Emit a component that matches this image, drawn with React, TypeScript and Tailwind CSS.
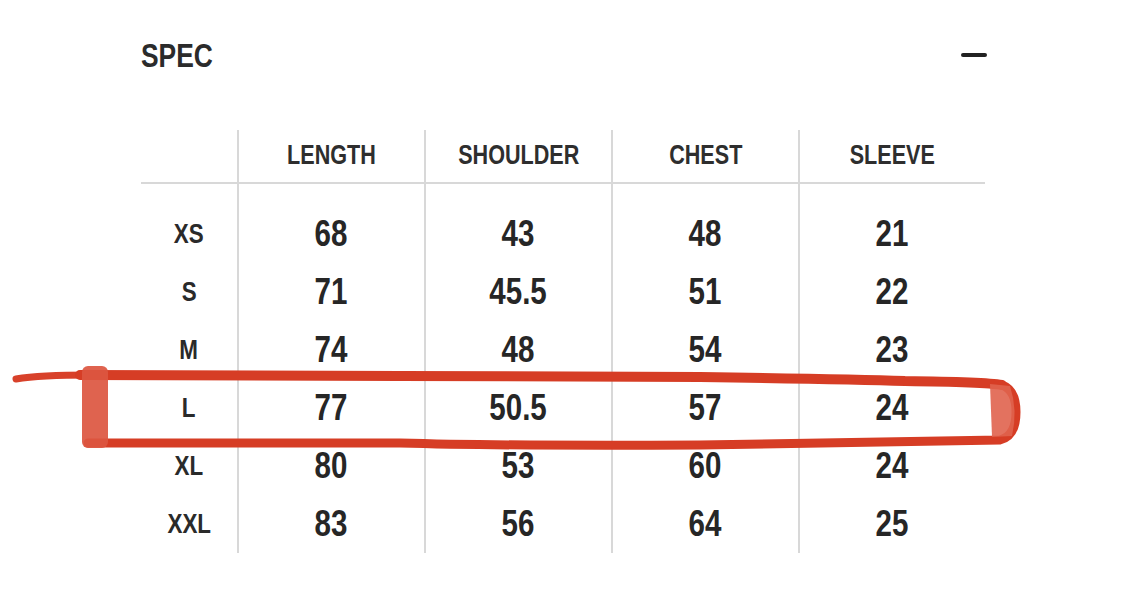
const font = { fontFamily: '"Liberation Sans", Arial, sans-serif' };

const headers = ['LENGTH', 'SHOULDER', 'CHEST', 'SLEEVE'];

const rows: { size: string; values: string[] }[] = [
  { size: 'XS', values: ['68', '43', '48', '21'] },
  { size: 'S', values: ['71', '45.5', '51', '22'] },
  { size: 'M', values: ['74', '48', '54', '23'] },
  { size: 'L', values: ['77', '50.5', '57', '24'] },
  { size: 'XL', values: ['80', '53', '60', '24'] },
  { size: 'XXL', values: ['83', '56', '64', '25'] },
];

function Column({ title, cells, first }: { title: string; cells: string[]; first?: boolean }) {
  return (
    <div className={first ? 'flex flex-col w-[96px]' : 'flex flex-col w-[187px] border-l-2 border-[#d8d8d8]'}>
      <div className="h-[54px] border-b-2 border-[#d8d8d8] flex items-center justify-center pb-[2px]">
        <span className="text-[27px] leading-none font-bold text-[#2e2e2e] scale-x-[0.8]">{title}</span>
      </div>
      <div className="h-[21px]" />
      {cells.map((c, i) => (
        <div key={i} className="h-[58px] flex items-center justify-center">
          <span
            className={
              first
                ? 'text-[28px] leading-none font-bold text-[#2a2a2a] scale-x-[0.8]'
                : 'text-[36px] leading-none font-bold text-[#262626] scale-x-[0.82]'
            }
          >
            {c}
          </span>
        </div>
      ))}
    </div>
  );
}

function RedMark() {
  return (
    <svg className="absolute left-0 top-0 pointer-events-none" width="1125" height="595" viewBox="0 0 1125 595">
      <path d="M16 379 Q40 375 90 375" stroke="#d8412a" strokeWidth="7" fill="none" strokeLinecap="round" />
      <path
        d="M80 375 L 400 376 L 700 377 Q 850 379 905 381 Q 985 382 1002 385"
        stroke="#d63d25"
        strokeWidth="10"
        fill="none"
        strokeLinecap="round"
      />
      <path
        d="M1002 385 Q 1016 390 1016 412 Q 1016 436 1000 440 Q 900 441 700 445 Q 500 446 400 443 L 88 443"
        stroke="#d63d25"
        strokeWidth="9"
        fill="none"
        strokeLinecap="round"
      />
      <path d="M990 384 L 1010 386 Q 1018 410 1012 436 L 992 437 Z" fill="#e0634e" opacity="0.9" />
      <rect x="82" y="366" width="26" height="82" rx="6" fill="#dc5640" opacity="0.92" />
    </svg>
  );
}

export default function App() {
  return (
    <div className="relative w-[1125px] h-[595px] bg-white overflow-hidden" style={font}>
      <div className="pl-[141px] pr-[138px] pt-[35px]">
        <div className="flex items-center justify-between h-[40px]">
          <span className="text-[33px] leading-none font-bold text-[#2b2b2b] scale-x-[0.8] origin-left">SPEC</span>
          <div className="w-[26px] h-[4px] bg-[#222] rounded-sm" />
        </div>
        <div className="flex mt-[55px]">
          <Column title="" cells={rows.map((r) => r.size)} first />
          {headers.map((h, i) => (
            <Column key={h} title={h} cells={rows.map((r) => r.values[i])} />
          ))}
        </div>
      </div>
      <RedMark />
    </div>
  );
}
